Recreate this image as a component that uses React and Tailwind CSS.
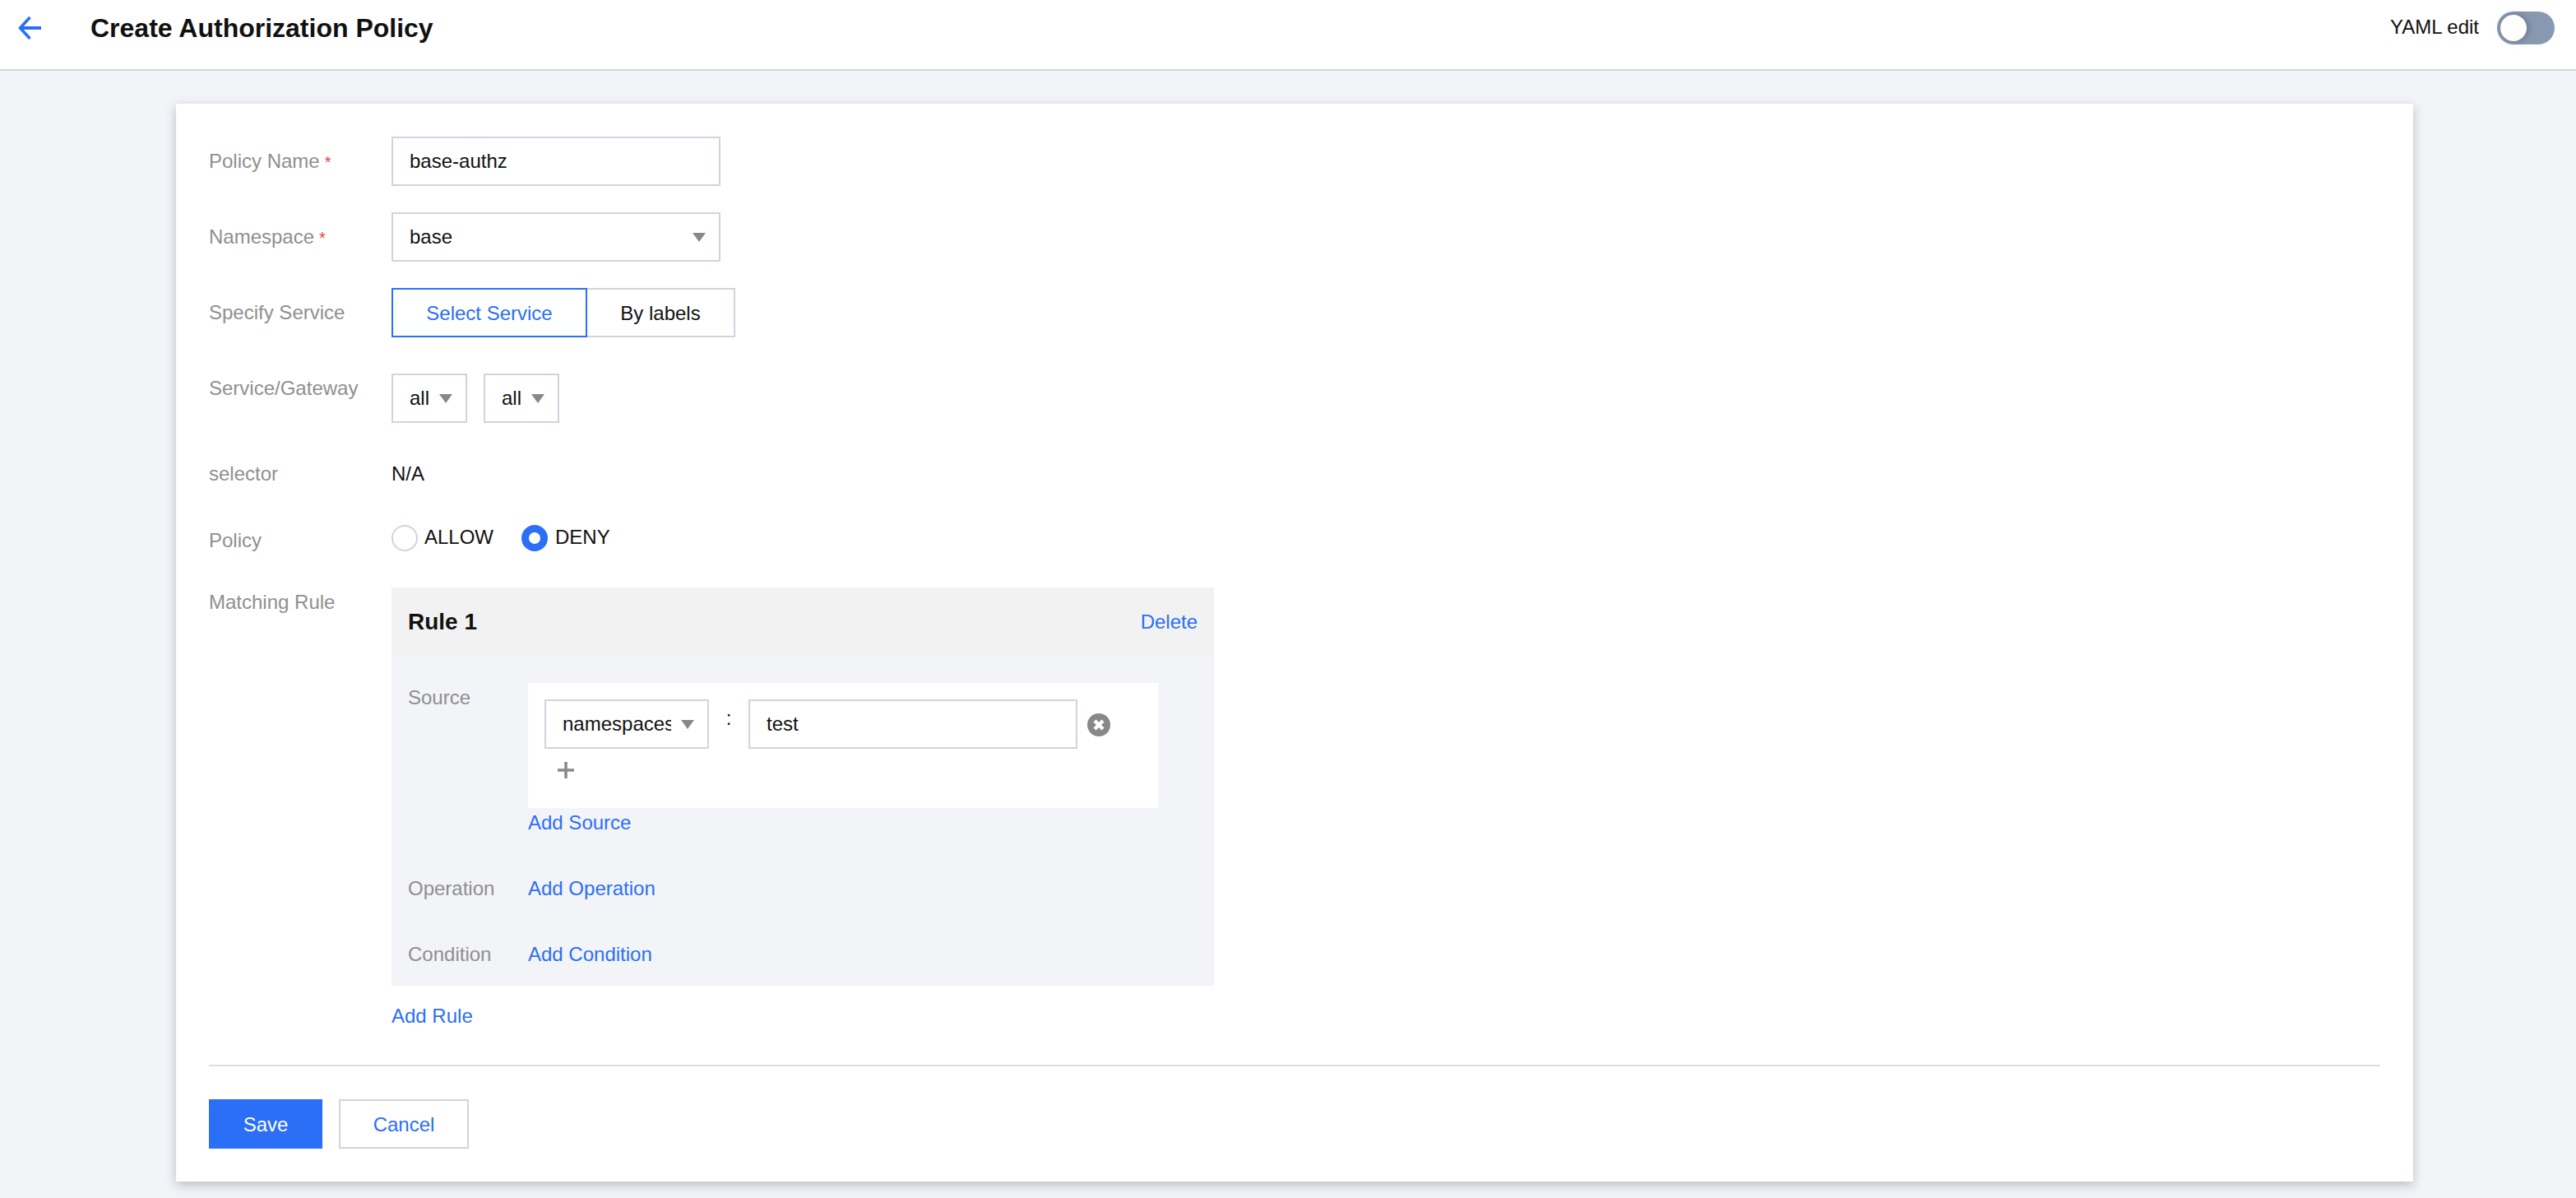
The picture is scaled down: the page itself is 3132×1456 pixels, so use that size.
const Arrow = ({ className }) => (
  <span className={`w-0 h-0 border-l-[8px] border-r-[8px] border-t-[11px] border-l-transparent border-r-transparent border-t-[#888888] ${className || ''}`} />
);

const Label = ({ children, required, className }) => (
  <div className={`w-[222px] shrink-0 leading-[36px] text-[#8f8f8f] ${className || ''}`}>
    {children}
    {required && <span className="ml-[6px] text-[#e54545] text-[20px]">*</span>}
  </div>
);

const TextField = ({ value, className }) => (
  <input
    type="text"
    readOnly
    value={value}
    className={`h-[60px] border-2 border-[#cfd5de] bg-white px-[20px] text-[24px] text-[#111111] outline-none ${className || ''}`}
  />
);

const Select = ({ value, className, textClass }) => (
  <div className={`h-[60px] border-2 border-[#cfd5de] bg-white flex items-center justify-between pl-[20px] pr-[16px] ${className || ''}`}>
    <span className={`overflow-hidden whitespace-nowrap text-[#111111] ${textClass || ''}`}>{value}</span>
    <Arrow />
  </div>
);

const Link = ({ children, className }) => (
  <a className={`block leading-[36px] text-[#2a6ff6] ${className || ''}`}>{children}</a>
);

const App = () => {
  return (
    <div className="min-h-screen bg-[#f3f4f8] text-[24px] text-[#111111] font-['Liberation_Sans',Arial,sans-serif]">
      <header className="h-[86px] bg-white border-b-2 border-[#cfd5de] flex items-start justify-between pt-[14px] pl-[20px] pr-[26px]">
        <div className="flex items-center h-[40px]">
          <svg width="32" height="32" viewBox="0 0 32 32" fill="none" stroke="#2a6ff6" strokeWidth="4">
            <path d="M30 16H5" />
            <path d="M16.5 3L4.5 16l12 13" strokeWidth="3.5" />
          </svg>
          <h1 className="ml-[58px] text-[32px] font-bold leading-[40px]">Create Authorization Policy</h1>
        </div>
        <div className="flex items-center h-[40px]">
          <span className="leading-[36px] mt-[-2px] mr-[2px]">YAML edit</span>
          <div className="ml-[20px] w-[70px] h-[40px] rounded-full bg-[#8a99b2] flex items-center pl-[4px]">
            <div className="w-[32px] h-[32px] rounded-full bg-white shadow-[2px_0_8px_rgba(60,70,90,0.45)]" />
          </div>
        </div>
      </header>

      <main className="pl-[214px] pr-[198px] pt-[40px] pb-[20px]">
        <div className="bg-white p-[40px] shadow-[0_4px_12px_rgba(54,58,80,0.3)]">
          <div className="flex items-start">
            <Label required className="pt-[12px]">Policy Name</Label>
            <TextField value="base-authz" className="w-[400px]" />
          </div>

          <div className="flex items-start mt-[32px]">
            <Label required className="pt-[12px]">Namespace</Label>
            <Select value="base" className="w-[400px]" />
          </div>

          <div className="flex items-start mt-[32px]">
            <Label className="pt-[12px]">Specify Service</Label>
            <div className="flex">
              <button className="w-[238px] h-[60px] pt-[2px] border-2 border-[#2a6ff6] text-[#2a6ff6]">Select Service</button>
              <button className="w-[180px] h-[60px] pt-[2px] border-2 border-l-0 border-[#cfd5de]">By labels</button>
            </div>
          </div>

          <div className="flex items-start mt-[44px]">
            <Label>Service/Gateway</Label>
            <div className="flex gap-[20px]">
              <Select value="all" className="w-[92px]" />
              <Select value="all" className="w-[92px]" />
            </div>
          </div>

          <div className="flex items-start mt-[44px]">
            <Label>selector</Label>
            <div className="leading-[36px]">N/A</div>
          </div>

          <div className="flex items-start mt-[42px]">
            <Label className="pt-[3px]">Policy</Label>
            <div className="flex items-center h-[36px]">
              <span className="w-[32px] h-[32px] rounded-full border-2 border-[#cfd5de] bg-white" />
              <span className="ml-[8px] mt-[-2px]">ALLOW</span>
              <span className="ml-[34px] w-[32px] h-[32px] rounded-full border-[9px] border-[#2a6ff6] bg-white" />
              <span className="ml-[9px] mt-[-2px]">DENY</span>
            </div>
          </div>

          <div className="flex items-start mt-[39px]">
            <Label>Matching Rule</Label>
            <div className="w-[1000px]">
              <div className="h-[84px] bg-[#f2f2f2] flex items-center justify-between px-[20px]">
                <span className="text-[28px] font-bold">Rule 1</span>
                <Link>Delete</Link>
              </div>
              <div className="bg-[#f3f4f8] px-[20px] pt-[32px] pb-[20px]">
                <div className="flex items-start">
                  <div className="w-[146px] shrink-0 leading-[36px] text-[#8f8f8f]">Source</div>
                  <div>
                    <div className="w-[766px] h-[152px] bg-white pt-[20px] pl-[20px]">
                      <div className="flex items-start">
                        <Select value="namespaces" className="w-[200px]" textClass="w-[132px]" />
                        <span className="w-[48px] text-center leading-[36px] mt-[5px]">:</span>
                        <TextField value="test" className="w-[400px]" />
                        <svg width="28" height="28" viewBox="0 0 28 28" className="ml-[12px] mt-[17px]">
                          <circle cx="14" cy="14" r="14" fill="#888888" />
                          <path d="M9 9l10 10M19 9L9 19" stroke="#ffffff" strokeWidth="4.5" />
                        </svg>
                      </div>
                      <svg width="20" height="20" viewBox="0 0 20 20" className="ml-[16px] mt-[16px]">
                        <path d="M10 0v20M0 10h20" stroke="#888888" strokeWidth="3.5" />
                      </svg>
                    </div>
                    <Link>Add Source</Link>
                  </div>
                </div>
                <div className="flex items-start mt-[44px]">
                  <div className="w-[146px] shrink-0 leading-[36px] text-[#8f8f8f]">Operation</div>
                  <Link>Add Operation</Link>
                </div>
                <div className="flex items-start mt-[44px]">
                  <div className="w-[146px] shrink-0 leading-[36px] text-[#8f8f8f]">Condition</div>
                  <Link>Add Condition</Link>
                </div>
              </div>
              <Link className="mt-[19px]">Add Rule</Link>
            </div>
          </div>

          <div className="mt-[41px] border-t-2 border-[#dddddd] pt-[40px] flex gap-[20px]">
            <button className="w-[138px] h-[60px] pt-[2px] bg-[#2a6ff6] text-white">Save</button>
            <button className="w-[158px] h-[60px] pt-[2px] border-2 border-[#cfd5de] text-[#2a6ff6]">Cancel</button>
          </div>
        </div>
      </main>
    </div>
  );
};

export default App;
